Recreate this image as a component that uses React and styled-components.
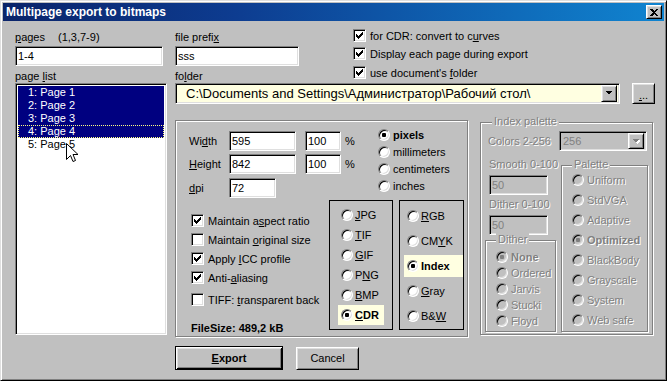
import React from 'react';
import styled, { createGlobalStyle, css } from 'styled-components';

const FACE = '#c0c0c0';
const FONT = '"Liberation Sans", Arial, sans-serif';

const Global = createGlobalStyle`
  html, body { margin: 0; padding: 0; background: ${FACE}; }
  body { font-family: ${FONT}; font-size: 11px; color: #000; }
  * { box-sizing: border-box; }
  u { text-decoration: underline; text-underline-offset: 1px; }
`;

const sunken = css`
  border: 1px solid;
  border-color: #808080 #fff #fff #808080;
  box-shadow: inset 1px 1px #000, inset -1px -1px #dfdfdf;
`;

const raised = css`
  border: 1px solid;
  border-color: #fff #000 #000 #fff;
  box-shadow: inset 1px 1px #dfdfdf, inset -1px -1px #808080;
`;

const disabledText = css`
  color: #808080;
  text-shadow: 1px 1px 0 #fff;
`;

const Window = styled.div`
  position: relative;
  width: 667px;
  height: 381px;
  background: ${FACE};
  border: 1px solid;
  border-color: #dfdfdf #000 #000 #dfdfdf;
  box-shadow: inset 1px 1px #fff, inset -1px -1px #808080;
  padding: 2px;
  display: flex;
  flex-direction: column;
  overflow: hidden;
`;

const TitleBar = styled.div`
  height: 18px;
  flex: none;
  display: flex;
  align-items: center;
  padding: 0 2px 0 3px;
  background: linear-gradient(to right, #0a246a 0%, #0d3c90 35%, #1084d0 100%);
`;

const TitleText = styled.div`
  flex: 1;
  color: #fff;
  font-weight: bold;
  font-size: 12px;
  line-height: 18px;
  white-space: nowrap;
`;

const CloseButton = styled.div`
  width: 16px;
  height: 14px;
  ${raised};
  background: ${FACE};
  display: flex;
  align-items: center;
  justify-content: center;
`;

const Body = styled.div`
  flex: 1;
  display: flex;
  padding: 8px 0 0 12px;
`;

const LeftCol = styled.div`
  width: 152px;
  flex: none;
  display: flex;
  flex-direction: column;
`;

const RightCol = styled.div`
  margin-left: 8px;
  display: flex;
  flex-direction: column;
`;

const Label = styled.div`
  height: 13px;
  line-height: 13px;
  white-space: nowrap;
  margin-top: ${(p) => p.$mt || 0}px;
  padding-left: ${(p) => p.$pl || 0}px;
  ${(p) => p.$disabled && disabledText};
`;

const Hint = styled.span`
  margin-left: 13px;
`;

const Field = styled.input.attrs({ readOnly: true })`
  display: block;
  width: ${(p) => p.$w}px;
  height: 20px;
  margin-top: ${(p) => p.$mt || 0}px;
  margin-left: ${(p) => p.$ml || 0}px;
  ${sunken};
  padding: 0 2px;
  font: 11px ${FONT};
  color: ${(p) => (p.$disabled ? '#808080' : '#000')};
  background: ${(p) => (p.$disabled ? FACE : '#fff')};
  outline: none;
`;

const ListBox = styled.div`
  height: 252px;
  ${sunken};
  background: #fff;
  padding: 2px;
  font-size: 11px;
`;

const ListRow = styled.div`
  height: 13px;
  line-height: ${(p) => (p.$focused ? 11 : 13)}px;
  padding-left: ${(p) => (p.$focused ? 9 : 10)}px;
  white-space: nowrap;
  background: ${(p) => (p.$selected ? '#000080' : 'transparent')};
  color: ${(p) => (p.$selected ? '#fff' : '#000')};
  border: ${(p) => (p.$focused ? '1px dotted #ffff80' : 'none')};
`;

const TopRow = styled.div`
  display: flex;
  align-items: flex-start;
`;

const PrefixCol = styled.div`
  width: 124px;
  display: flex;
  flex-direction: column;
`;

const ChecksCol = styled.div`
  margin-left: ${(p) => p.$ml || 0}px;
  margin-top: ${(p) => p.$mt || 0}px;
  display: flex;
  flex-direction: column;
  gap: ${(p) => p.$gap || 5}px;
  width: ${(p) => (p.$w ? `${p.$w}px` : 'auto')};
`;

const CheckRow = styled.div`
  display: flex;
  align-items: center;
  gap: ${(p) => p.$gap || 4}px;
  height: 13px;
  white-space: nowrap;
  margin-top: ${(p) => p.$mt || 0}px;
`;

const CheckBox = styled.span`
  width: 13px;
  height: 13px;
  flex: none;
  ${sunken};
  background: #fff;
  display: flex;
  align-items: center;
  justify-content: center;
`;

const FolderRow = styled.div`
  display: flex;
  gap: 12px;
  height: 21px;
`;

const Combo = styled.div`
  width: ${(p) => p.$w}px;
  height: ${(p) => p.$h || 21}px;
  ${sunken};
  background: ${(p) => p.$bg || '#fff'};
  display: flex;
  align-items: center;
  padding: 2px;
`;

const ComboText = styled.div`
  flex: 1;
  white-space: nowrap;
  overflow: hidden;
  font-size: ${(p) => p.$size || 11}px;
  padding-left: ${(p) => p.$pl || 2}px;
  color: ${(p) => (p.$disabled ? '#808080' : '#000')};
`;

const ArrowButton = styled.div`
  width: 16px;
  height: ${(p) => p.$h || 17}px;
  flex: none;
  ${raised};
  background: ${FACE};
  display: flex;
  align-items: center;
  justify-content: center;
`;

const SmallButton = styled.div`
  width: 23px;
  height: 21px;
  ${raised};
  background: ${FACE};
  display: flex;
  align-items: flex-end;
  justify-content: center;
  padding-bottom: 4px;
  font-size: 11px;
  line-height: 8px;
`;

const MainRow = styled.div`
  display: flex;
  align-items: flex-start;
  margin-top: 16px;
`;

const EtchedGroup = styled.div`
  position: relative;
  flex: none;
  width: ${(p) => p.$w}px;
  height: ${(p) => p.$h}px;
  margin-top: ${(p) => p.$mt || 0}px;
  margin-left: ${(p) => p.$ml || 0}px;
  border: 1px solid #808080;
  box-shadow: inset 1px 1px #fff, 1px 1px #fff;
  display: flex;
  flex-direction: column;
  padding: ${(p) => p.$pad || '0'};
`;

const Legend = styled.span`
  position: absolute;
  top: -8px;
  left: ${(p) => p.$left || 10}px;
  padding: 0 2px;
  background: ${FACE};
  line-height: 13px;
  white-space: nowrap;
  ${disabledText};
`;

const UpperRow = styled.div`
  display: flex;
  align-items: flex-start;
  padding-left: 13px;
`;

const FieldsCol = styled.div`
  width: 176px;
  margin-top: 10px;
  display: flex;
  flex-direction: column;
`;

const FieldRow = styled.div`
  display: flex;
  align-items: center;
  height: 20px;
  margin-top: ${(p) => p.$mt || 0}px;
`;

const FieldLabel = styled.div`
  width: 40px;
  white-space: nowrap;
`;

const Percent = styled.div`
  margin-left: 4px;
`;

const UnitsCol = styled.div`
  margin-left: 10px;
  margin-top: 5px;
  display: flex;
  flex-direction: column;
`;

const RadioRow = styled.div`
  display: flex;
  align-items: center;
  gap: ${(p) => (p.$gap === undefined ? 2 : p.$gap)}px;
  height: ${(p) => p.$h}px;
  margin-top: ${(p) => p.$mt || 0}px;
  padding: 0 5px 0 3px;
  white-space: nowrap;
  align-self: ${(p) => (p.$stretch ? 'stretch' : 'flex-start')};
  background: ${(p) => (p.$hl ? '#ffffe1' : 'transparent')};
  font-weight: ${(p) => (p.$bold ? 'bold' : 'normal')};
  ${(p) => p.$disabled && disabledText};
`;

const RadioCircle = styled.span`
  width: 12px;
  height: 12px;
  flex: none;
  border-radius: 50%;
  border: 1px solid;
  border-color: #808080 #fff #fff #808080;
  box-shadow: inset 1px 1px #000, inset -1px -1px #dfdfdf;
  background: ${(p) => (p.$disabled ? FACE : '#fff')};
  display: flex;
  align-items: center;
  justify-content: center;
  text-shadow: none;
  &::after {
    content: '';
    width: 4px;
    height: 4px;
    border-radius: 1px;
    background: ${(p) => (p.$disabled ? '#808080' : '#000')};
    display: ${(p) => (p.$checked ? 'block' : 'none')};
  }
`;

const LowerRow = styled.div`
  display: flex;
  align-items: flex-start;
  margin-top: 2px;
  padding-left: 15px;
`;

const FileSize = styled.div`
  margin-top: 10px;
  height: 13px;
  line-height: 13px;
  font-weight: bold;
  white-space: nowrap;
`;

const FrameBox = styled.div`
  width: ${(p) => p.$w}px;
  height: 130px;
  margin-left: ${(p) => p.$ml || 0}px;
  border: 1px solid #000;
  display: flex;
  flex-direction: column;
  padding: ${(p) => p.$pad};
  gap: ${(p) => p.$gap || 0}px;
`;

const ColorsRow = styled.div`
  display: flex;
  align-items: center;
  margin-top: 8px;
  padding-left: 7px;
`;

const ColorsLabel = styled.div`
  width: 71px;
  white-space: nowrap;
  ${disabledText};
`;

const IndexLower = styled.div`
  display: flex;
  align-items: flex-start;
  margin-top: 7px;
  padding-left: 4px;
`;

const IndexLeft = styled.div`
  width: 71px;
  display: flex;
  flex-direction: column;
`;

const ButtonRow = styled.div`
  display: flex;
  align-items: center;
  margin-top: 9px;
  gap: 13px;
`;

const PushButton = styled.div`
  width: ${(p) => p.$w}px;
  height: ${(p) => p.$h}px;
  background: ${FACE};
  display: flex;
  align-items: center;
  justify-content: center;
  font-size: 11px;
  font-weight: ${(p) => (p.$default ? 'bold' : 'normal')};
  ${(p) =>
    p.$default
      ? css`
          border: 1px solid #000;
          box-shadow: inset 1px 1px #fff, inset -1px -1px #000, inset 2px 2px #dfdfdf,
            inset -2px -2px #808080;
        `
      : raised};
`;

const Cursor = styled.svg`
  position: absolute;
  left: 65px;
  top: 142px;
  pointer-events: none;
`;

const CheckMark = () => (
  <svg width="7" height="7" viewBox="0 0 7 7" shapeRendering="crispEdges">
    <path
      d="M6 0h1v3h-1v1h-1v1h-1v1h-1v1h-1v-1h-1v-1h-1v-3h1v1h1v1h1v-1h1v-1h1z"
      fill="#000"
    />
  </svg>
);

const Arrow = ({ disabled }) => (
  <svg width="8" height="5" viewBox="0 0 8 5" shapeRendering="crispEdges">
    {disabled && <path d="M2 1h7l-3.5 4z" fill="#fff" />}
    <path d="M0.5 0h7l-3.5 4z" fill={disabled ? '#808080' : '#000'} />
  </svg>
);

const Check = ({ children, checked = true, mt }) => (
  <CheckRow $mt={mt}>
    <CheckBox>{checked && <CheckMark />}</CheckBox>
    <span>{children}</span>
  </CheckRow>
);

const Radio = ({ children, checked, disabled, h, bold, hl, stretch, mt, gap }) => (
  <RadioRow $h={h} $bold={bold} $hl={hl} $stretch={stretch} $disabled={disabled} $mt={mt} $gap={gap}>
    <RadioCircle $checked={checked} $disabled={disabled} />
    <span>{children}</span>
  </RadioRow>
);

export default function App() {
  return (
    <>
      <Global />
      <Window>
        <TitleBar>
          <TitleText>Multipage export to bitmaps</TitleText>
          <CloseButton>
            <svg width="8" height="7" viewBox="0 0 8 7" shapeRendering="crispEdges">
              <path d="M0 0h2l2 2 2-2h2l-3 3.5 3 3.5h-2l-2-2-2 2h-2l3-3.5z" fill="#000" />
            </svg>
          </CloseButton>
        </TitleBar>
        <Body>
          <LeftCol>
            <Label $mt={2}>
              <u>p</u>ages<Hint>(1,3,7-9)</Hint>
            </Label>
            <Field $w={148} $mt={2} value="1-4" />
            <Label $mt={4}>
              page <u>l</u>ist
            </Label>
            <ListBox>
              <ListRow $selected>1: Page 1</ListRow>
              <ListRow $selected>2: Page 2</ListRow>
              <ListRow $selected>3: Page 3</ListRow>
              <ListRow $selected $focused>4: Page 4</ListRow>
              <ListRow>5: Page 5</ListRow>
            </ListBox>
          </LeftCol>

          <RightCol>
            <TopRow>
              <PrefixCol>
                <Label $mt={2}>
                  file prefi<u>x</u>
                </Label>
                <Field $w={124} $mt={2} value="sss" />
                <Label $mt={4}>
                  fo<u>l</u>der
                </Label>
              </PrefixCol>
              <ChecksCol $ml={54} $gap={5}>
                <Check>
                  for CDR: convert to c<u>u</u>rves
                </Check>
                <Check>Display each page during export</Check>
                <Check mt={1}>
                  use document's <u>f</u>older
                </Check>
              </ChecksCol>
            </TopRow>

            <FolderRow>
              <Combo $w={445} $bg="#ffffe1">
                <ComboText $size={13} $pl={8}>
                  C:\Documents and Settings\Администратор\Рабочий стол\
                </ComboText>
                <ArrowButton>
                  <Arrow />
                </ArrowButton>
              </Combo>
              <SmallButton>
                <span>
                  <u>.</u>..
                </span>
              </SmallButton>
            </FolderRow>

            <MainRow>
              <EtchedGroup $w={293} $h={217}>
                <UpperRow>
                  <FieldsCol>
                    <FieldRow>
                      <FieldLabel>
                        Wi<u>d</u>th
                      </FieldLabel>
                      <Field $w={67} value="595" />
                      <Field $w={36} $ml={9} value="100" />
                      <Percent>%</Percent>
                    </FieldRow>
                    <FieldRow $mt={3}>
                      <FieldLabel>
                        <u>H</u>eight
                      </FieldLabel>
                      <Field $w={67} value="842" />
                      <Field $w={36} $ml={9} value="100" />
                      <Percent>%</Percent>
                    </FieldRow>
                    <FieldRow $mt={4}>
                      <FieldLabel>
                        <u>d</u>pi
                      </FieldLabel>
                      <Field $w={47} value="72" />
                    </FieldRow>
                  </FieldsCol>
                  <UnitsCol>
                    <Radio h={17} checked bold gap={3}>
                      pixels
                    </Radio>
                    <Radio h={17} gap={3}>millimeters</Radio>
                    <Radio h={17} gap={3}>centimeters</Radio>
                    <Radio h={17} gap={3}>inches</Radio>
                  </UnitsCol>
                </UpperRow>

                <LowerRow>
                  <ChecksCol $w={138} $mt={14} $gap={6}>
                    <Check>
                      Maintain a<u>s</u>pect ratio
                    </Check>
                    <Check checked={false}>
                      Maintain <u>o</u>riginal size
                    </Check>
                    <Check>
                      Apply <u>I</u>CC profile
                    </Check>
                    <Check>
                      Anti-<u>a</u>liasing
                    </Check>
                    <Check checked={false} mt={3}>
                      TIFF: <u>t</u>ransparent back
                    </Check>
                    <FileSize>FileSize: 489,2 kB</FileSize>
                  </ChecksCol>
                  <FrameBox $w={64} $pad="4px 0 0 8px">
                    <Radio h={20}>
                      <u>J</u>PG
                    </Radio>
                    <Radio h={20}>
                      <u>T</u>IF
                    </Radio>
                    <Radio h={20}>
                      <u>G</u>IF
                    </Radio>
                    <Radio h={20}>
                      P<u>N</u>G
                    </Radio>
                    <Radio h={20}>
                      <u>B</u>MP
                    </Radio>
                    <Radio h={20} checked bold hl>
                      <u>C</u>DR
                    </Radio>
                  </FrameBox>
                  <FrameBox $w={65} $ml={6} $pad="4px 0 0 4px" $gap={3}>
                    <Radio h={22} stretch>
                      <u>R</u>GB
                    </Radio>
                    <Radio h={22} stretch>
                      CM<u>Y</u>K
                    </Radio>
                    <Radio h={22} stretch checked bold hl>
                      Index
                    </Radio>
                    <Radio h={22} stretch>
                      <u>G</u>ray
                    </Radio>
                    <Radio h={22} stretch>
                      B&amp;<u>W</u>
                    </Radio>
                  </FrameBox>
                </LowerRow>
              </EtchedGroup>

              <EtchedGroup $w={173} $h={213} $mt={2} $ml={12}>
                <Legend $left={11}>Index palette</Legend>
                <ColorsRow>
                  <ColorsLabel>Colors 2-256</ColorsLabel>
                  <Combo $w={88} $h={20} $bg={FACE}>
                    <ComboText $disabled $pl={1}>
                      256
                    </ComboText>
                    <ArrowButton $h={16}>
                      <Arrow disabled />
                    </ArrowButton>
                  </Combo>
                </ColorsRow>
                <IndexLower>
                  <IndexLeft>
                    <Label $disabled $pl={4}>
                      Smooth 0-100
                    </Label>
                    <Field $w={59} $ml={4} $mt={4} $disabled value="50" />
                    <Label $disabled $pl={4} $mt={3}>
                      Dither 0-100
                    </Label>
                    <Field $w={59} $ml={4} $mt={4} $disabled value="50" />
                    <EtchedGroup $w={71} $h={92} $mt={5} $pad="8px 0 0 7px">
                      <Legend $left={10}>Dither</Legend>
                      <Radio h={16} checked bold disabled gap={3}>
                        None
                      </Radio>
                      <Radio h={16} disabled gap={3}>Ordered</Radio>
                      <Radio h={16} disabled gap={3}>Jarvis</Radio>
                      <Radio h={16} disabled gap={3}>Stucki</Radio>
                      <Radio h={16} disabled gap={3}>Floyd</Radio>
                    </EtchedGroup>
                  </IndexLeft>
                  <EtchedGroup $w={87} $h={167} $mt={7} $ml={5} $pad="4px 0 0 7px">
                    <Legend $left={10}>Palette</Legend>
                    <Radio h={20} disabled gap={3}>Uniform</Radio>
                    <Radio h={20} disabled gap={3}>StdVGA</Radio>
                    <Radio h={20} disabled gap={3}>Adaptive</Radio>
                    <Radio h={20} disabled checked bold gap={3}>
                      Optimized
                    </Radio>
                    <Radio h={20} disabled gap={3}>BlackBody</Radio>
                    <Radio h={20} disabled gap={3}>Grayscale</Radio>
                    <Radio h={20} disabled gap={3}>System</Radio>
                    <Radio h={20} disabled gap={3}>Web safe</Radio>
                  </EtchedGroup>
                </IndexLower>
              </EtchedGroup>
            </MainRow>

            <ButtonRow>
              <PushButton $w={108} $h={24} $default>
                <span>
                  <u>E</u>xport
                </span>
              </PushButton>
              <PushButton $w={63} $h={23}>
                Cancel
              </PushButton>
            </ButtonRow>
          </RightCol>
        </Body>
        <Cursor width="13" height="21" viewBox="0 0 13 21">
          <path
            d="M0.5 0.5 L0.5 16.5 L4.5 12.5 L7 18.5 L9.5 17.5 L7 11.5 L12 11.5 Z"
            fill="#fff"
            stroke="#000"
            strokeWidth="1"
          />
        </Cursor>
      </Window>
    </>
  );
}
